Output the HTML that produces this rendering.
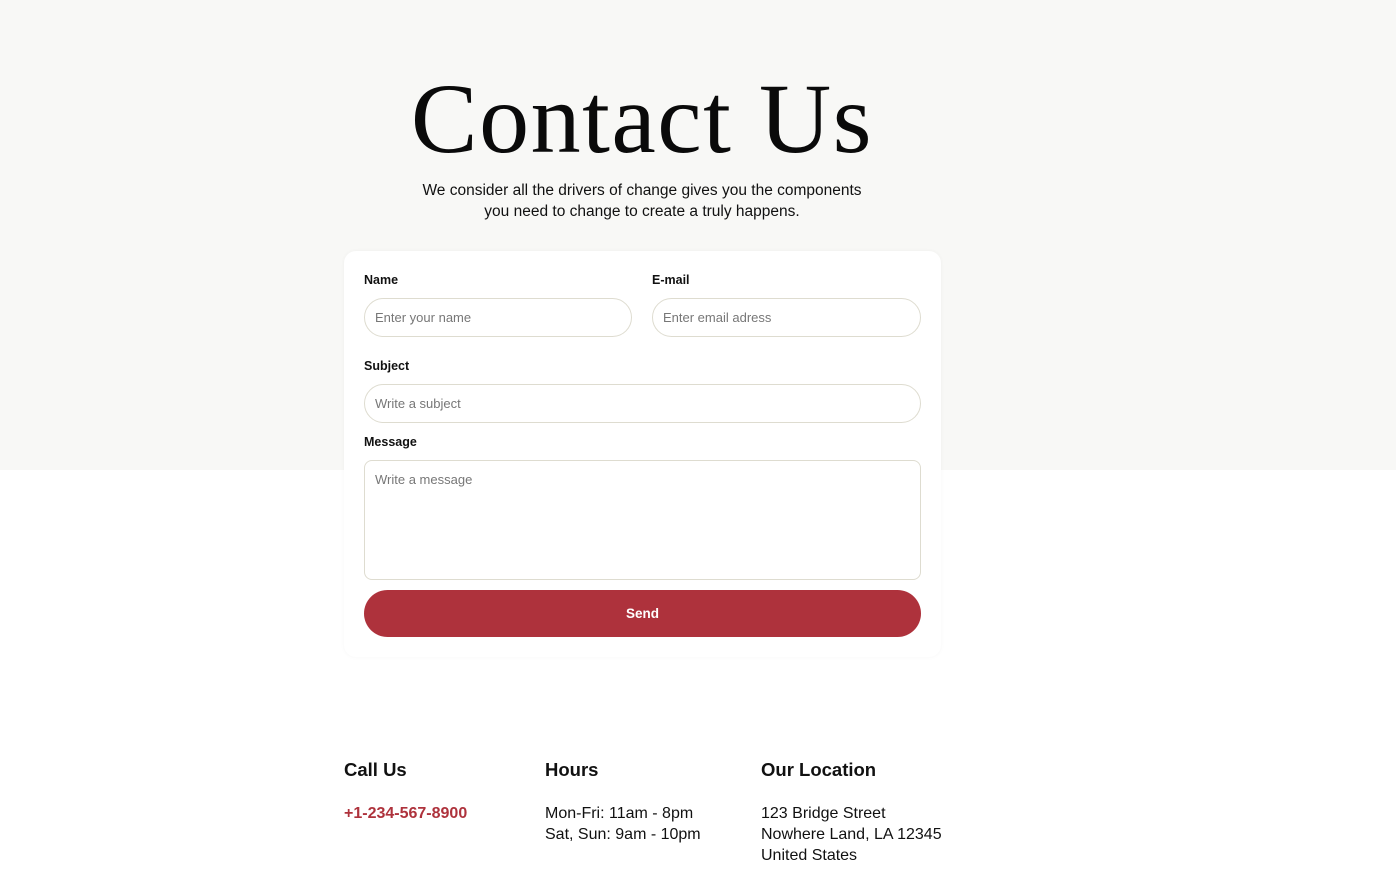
<!DOCTYPE html>
<html><head><style>
*{box-sizing:border-box;margin:0;padding:0}
body{width:1396px;height:883px;background:#fff;font-family:"Liberation Sans",sans-serif;color:#111;position:relative;overflow:hidden}
.top{position:absolute;left:0;top:0;width:1396px;height:470px;background:#f8f8f6}
h1{position:absolute;left:0;width:1284px;top:63px;text-align:center;font-family:"Liberation Serif",serif;font-weight:400;font-size:100px;line-height:112px;color:#0a0a0a;letter-spacing:1.5px}
.sub{position:absolute;left:0;width:1284px;top:180px;text-align:center;font-size:15.5px;line-height:21px;color:#111}
.card{position:absolute;left:344px;top:251px;width:597px;height:406px;background:#fff;border-radius:12px;box-shadow:0 0 4px rgba(0,0,0,0.04)}
.lbl{position:absolute;font-size:12.5px;font-weight:700;color:#111}
.in{position:absolute;height:39px;border:1px solid #dedcd0;border-radius:20px;font-size:13px;color:#777;padding-left:10px;line-height:37px}
.ta{position:absolute;border:1px solid #dedcd0;border-radius:8px;font-size:13px;color:#777;padding:11px 10px}
.btn{position:absolute;left:20px;top:339px;width:557px;height:47px;background:#ae323c;border-radius:24px;color:#fff;font-weight:700;font-size:13.5px;text-align:center;line-height:47px}
.h{position:absolute;top:759px;font-size:18.5px;font-weight:700;color:#111}
.t{position:absolute;top:803px;font-size:16px;line-height:21px;color:#111}
</style></head><body>
<div class="top"></div>
<h1>Contact Us</h1>
<div class="sub">We consider all the drivers of change gives you the components<br>you need to change to create a truly happens.</div>
<div class="card">
<div class="lbl" style="left:20px;top:22px">Name</div>
<div class="lbl" style="left:308px;top:22px">E-mail</div>
<div class="in" style="left:20px;top:47px;width:268px">Enter your name</div>
<div class="in" style="left:308px;top:47px;width:269px">Enter email adress</div>
<div class="lbl" style="left:20px;top:108px">Subject</div>
<div class="in" style="left:20px;top:133px;width:557px">Write a subject</div>
<div class="lbl" style="left:20px;top:184px">Message</div>
<div class="ta" style="left:20px;top:209px;width:557px;height:120px">Write a message</div>
<div class="btn">Send</div>
</div>
<div class="h" style="left:344px">Call Us</div>
<div class="h" style="left:545px">Hours</div>
<div class="h" style="left:761px">Our Location</div>
<div class="t" style="left:344px;color:#ae323c;font-weight:700">+1-234-567-8900</div>
<div class="t" style="left:545px">Mon-Fri: 11am - 8pm<br>Sat, Sun: 9am - 10pm</div>
<div class="t" style="left:761px">123 Bridge Street<br>Nowhere Land, LA 12345<br>United States</div>
</body></html>
